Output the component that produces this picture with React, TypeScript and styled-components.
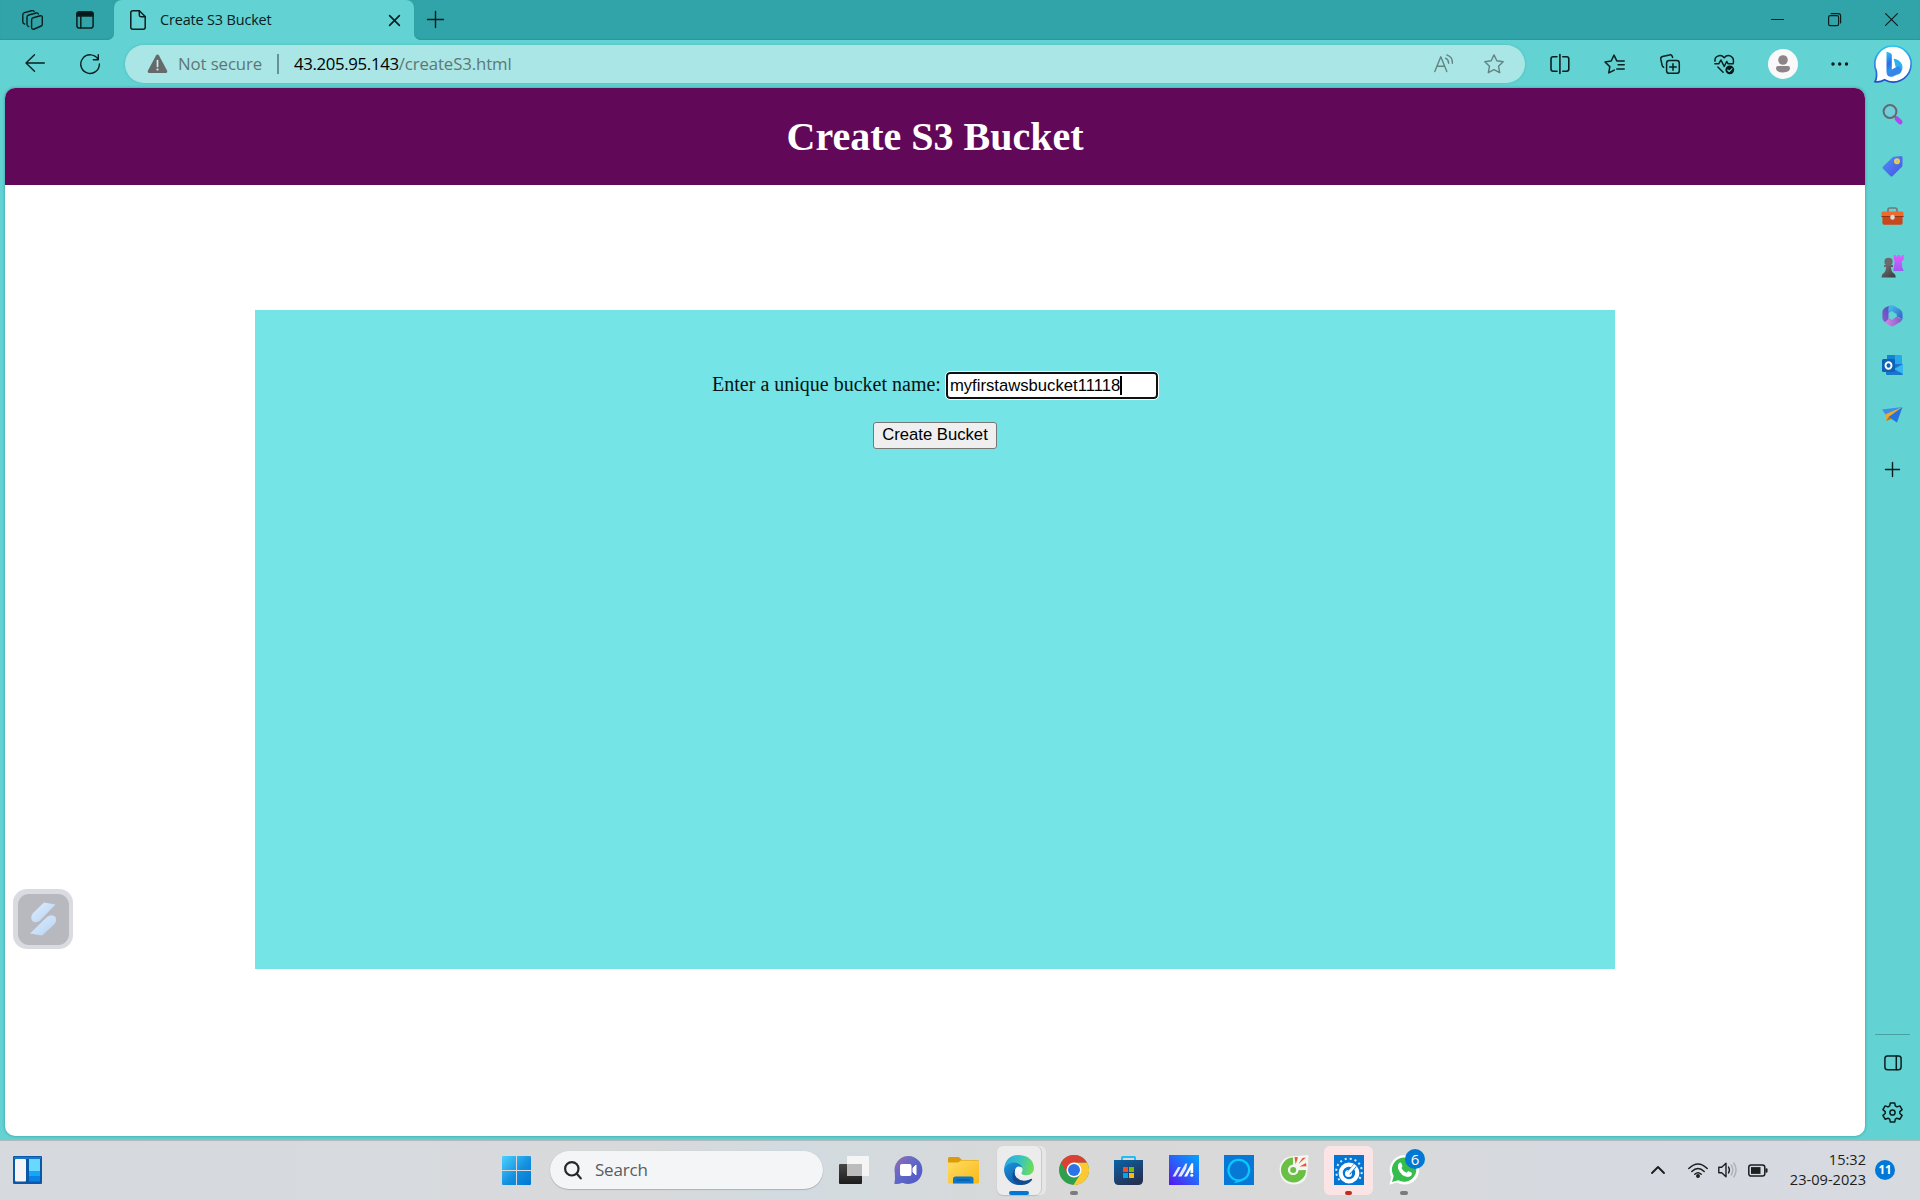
import React from "react";
import styled, { createGlobalStyle } from "styled-components";

const ui = `"Open Sans", "Noto Sans", sans-serif`;

const GlobalStyle = createGlobalStyle`
  * { box-sizing: border-box; }
  html, body { margin: 0; padding: 0; overflow: hidden; }
  svg { display: block; flex: none; overflow: visible; }
`;

const Desktop = styled.div`
  width: 1920px;
  height: 1200px;
  display: flex;
  flex-direction: column;
  background: #62d2d2;
  overflow: hidden;
`;

/* ---------- title bar ---------- */
const TitleBar = styled.header`
  height: 40px;
  flex: none;
  display: flex;
  background: #62d2d2;
`;
const StripLeft = styled.div`
  width: 114px;
  display: flex;
  align-items: center;
  padding-left: 22px;
  gap: 33px;
  background: #30a4a8;
  border-bottom-right-radius: 7px;
  box-shadow: inset 0 -1px 1px #2b989c;
`;
const TabBack = styled.div`
  width: 300px;
  background: linear-gradient(#30a4a8 0 50%, #62d2d2 50%);
`;
const Tab = styled.div`
  height: 40px;
  display: flex;
  align-items: center;
  padding: 0 14px 0 16px;
  background: #62d2d2;
  border-radius: 8px 8px 0 0;
`;
const TabTitle = styled.span`
  flex: 1;
  margin-left: 14px;
  padding-bottom: 1px;
  font: 400 14.4px/20px ${ui};
  letter-spacing: -0.13px;
  color: #06201f;
  white-space: nowrap;
`;
const StripRight = styled.div`
  flex: 1;
  display: flex;
  align-items: center;
  padding: 0 22px 1px 13px;
  background: #30a4a8;
  border-bottom-left-radius: 7px;
  box-shadow: inset 0 -1px 1px #2b989c;
`;
const WindowButtons = styled.div`
  display: flex;
  gap: 44px;
  margin-left: auto;
`;

/* ---------- toolbar ---------- */
const Toolbar = styled.nav`
  height: 48px;
  flex: none;
  display: flex;
  align-items: center;
  padding-left: 25px;
`;
const NavButtons = styled.div`
  width: 100px;
  flex: none;
  display: flex;
  gap: 35px;
`;
const AddressBar = styled.div`
  width: 1400px;
  height: 38px;
  flex: none;
  display: flex;
  align-items: center;
  padding: 0 21px 0 22px;
  border-radius: 19px;
  background: #a9e6e5;
  box-shadow: 0 0 3px rgba(30, 130, 130, 0.25);
`;
const AddressText = styled.span<{ $tone: string; $spacing: number }>`
  font: 400 16.8px/24px ${ui};
  letter-spacing: ${(p) => p.$spacing}px;
  color: ${(p) => p.$tone};
  white-space: nowrap;
`;
const NotSecure = styled.div`
  width: 99px;
  margin-left: 10px;
`;
const Divider = styled.span`
  width: 2px;
  height: 20px;
  margin-right: 15px;
  background: #69918f;
`;
const AddressActions = styled.div`
  display: flex;
  gap: 30px;
  margin-left: auto;
`;
const ToolSlot = styled.div<{ $w?: number }>`
  width: ${(p) => p.$w ?? 55}px;
  display: flex;
  justify-content: center;
`;
const ToolGroup = styled.div`
  display: flex;
  flex: none;
  align-items: center;
  margin-left: 7px;
`;

/* ---------- page + sidebar ---------- */
const Middle = styled.div`
  height: 1052px;
  flex: none;
  display: flex;
  padding: 0 0 4px 5px;
`;
const Page = styled.main`
  position: relative;
  width: 1860px;
  background: #fff;
  border-radius: 10px;
  overflow: hidden;
  box-shadow: 0 0 3px rgba(20, 90, 90, 0.5);
`;
const Banner = styled.div`
  height: 97px;
  display: flex;
  align-items: center;
  justify-content: center;
  background: #610858;
`;
const Heading = styled.h1`
  margin: 0;
  font: 700 40px/46px "Liberation Serif", "Times New Roman", serif;
  color: #fff;
`;
const FormPanel = styled.form`
  width: 1360px;
  height: 659px;
  margin: 125px auto 0;
  padding-top: 62px;
  display: flex;
  flex-direction: column;
  align-items: center;
  background: #74e4e7;
`;
const Field = styled.label`
  display: flex;
  align-items: flex-start;
  gap: 5px;
  font: 400 20px/26px "Liberation Serif", "Times New Roman", serif;
  color: #061413;
`;
const FieldName = styled.span`
  height: 26px;
  line-height: 25px;
`;
const BucketInput = styled.div`
  width: 212px;
  height: 27px;
  display: flex;
  align-items: center;
  padding: 0 0 1px 2px;
  border: 2px solid #101010;
  border-radius: 4px;
  outline: 1px solid #fff;
  background: #fff;
  font: 400 16.67px/19px "Liberation Sans", Arial, sans-serif;
  color: #000;
`;
const Caret = styled.span`
  width: 1.5px;
  height: 19px;
  background: #000;
`;
const Submit = styled.button`
  width: 124px;
  height: 27px;
  margin-top: 23px;
  padding: 0 0 2px;
  border: 1px solid #767676;
  border-radius: 3px;
  background: #efefef;
  font: 400 16.67px/20px "Liberation Sans", Arial, sans-serif;
  color: #000;
  white-space: nowrap;
`;
const FloatingWidget = styled.div`
  position: absolute;
  left: 8px;
  top: 801px;
  width: 60px;
  height: 60px;
  display: grid;
  place-items: center;
  border-radius: 14px;
  background: #dadbe0;
`;
const WidgetInner = styled.div`
  width: 51px;
  height: 51px;
  display: grid;
  place-items: center;
  border-radius: 11px;
  background: #b8b9bf;
`;

const Sidebar = styled.aside`
  width: 55px;
  display: flex;
  flex-direction: column;
  align-items: center;
`;
const SideSlot = styled.div<{ $h: number }>`
  height: ${(p) => p.$h}px;
  flex: none;
  display: flex;
  align-items: center;
`;
const SideBottom = styled.div`
  width: 35px;
  margin-top: auto;
  padding-top: 20px;
  padding-bottom: 13px;
  display: flex;
  flex-direction: column;
  align-items: center;
  gap: 31px;
  border-top: 1px solid #4a9f9f;
`;

/* ---------- taskbar ---------- */
const Taskbar = styled.footer`
  height: 60px;
  flex: none;
  display: flex;
  align-items: center;
  padding: 0 25px 1px 13px;
  border-top: 1px solid #b3b9bb;
  background: linear-gradient(90deg, #d6d9de 0, #d7dade 22%, #d8d9da 33%, #d2dbe0 41%, #d5dadc 48%, #d8d8d8 54%, #d9d9d9 70%, #d6d9df 80%, #d7dadf 100%);
`;
const StartSlot = styled.div`
  margin-left: 460px;
`;
const SearchBox = styled.div`
  width: 273px;
  height: 38px;
  margin-left: 19px;
  padding-left: 14px;
  display: flex;
  align-items: center;
  gap: 13px;
  border-radius: 19px;
  background: #f3f5f6;
  box-shadow: 0 1px 1px #aeb2b5, 0 0 1px #b9bdc0;
  font: 400 17px/24px ${ui};
  letter-spacing: -0.2px;
  color: #5a5c5e;
`;
const Apps = styled.div`
  display: flex;
  margin-left: 3px;
`;
const AppSlot = styled.div`
  position: relative;
  width: 55px;
  height: 50px;
  display: grid;
  place-items: center;
`;
const ActiveTile = styled.div<{ $tint: string; $w: number; $stack?: boolean }>`
  width: ${(p) => p.$w}px;
  height: 49px;
  display: grid;
  place-items: center;
  border-radius: 6px;
  background: ${(p) => p.$tint};
  box-shadow: ${(p) => (p.$stack ? "1px 0 0 #c9c9c9, 5px 0 0 #e6e6e6, 0 1px 1px #bbb" : "none")};
`;
const Pill = styled.span<{ $w: number; $tone: string }>`
  position: absolute;
  bottom: 0;
  left: calc(50% - ${(p) => p.$w / 2}px);
  width: ${(p) => p.$w}px;
  height: 4px;
  border-radius: 2px;
  background: ${(p) => p.$tone};
`;
const CountBadge = styled.span`
  position: absolute;
  right: 6px;
  top: 4px;
  width: 20px;
  height: 20px;
  border-radius: 50%;
  background: #0078d4;
  color: #fff;
  text-align: center;
  font: 400 15px/20px ${ui};
`;
const Tray = styled.div`
  margin-left: auto;
  display: flex;
  align-items: center;
`;
const TrayIcons = styled.div`
  display: flex;
  align-items: center;
  gap: 10px;
  margin-left: 23px;
`;
const Clock = styled.div`
  width: 98px;
  padding-bottom: 3px;
  text-align: right;
  font: 400 14.6px/20px ${ui};
  letter-spacing: 0;
  color: #1c1e20;
`;
const NoticeBadge = styled.div`
  width: 20px;
  height: 20px;
  margin-left: 9px;
  border-radius: 50%;
  background: #0078d7;
  color: #fff;
  text-align: center;
  font: 700 11.5px/20px ${ui};
`;

/* ---------- line icon base ---------- */
type LineProps = { w?: number; h?: number; color?: string; sw?: number; children: React.ReactNode };
const Line = ({ w = 20, h = 20, color = "#0b1f1f", sw = 1.5, children }: LineProps) => (
  <svg width={w} height={h} viewBox={`0 0 ${w} ${h}`} fill="none" stroke={color} strokeWidth={sw} strokeLinecap="round" strokeLinejoin="round">
    {children}
  </svg>
);

const WorkspacesIcon = () => (
  <Line w={21} h={20} sw={1.4}>
    <path d="M11.300 7.700 18.300 5.800Q20.300 5.500 20.300 7.500V14.200Q20.300 15.500 19.200 16L12.300 19Q9.600 19.800 9.600 17.300V10Q9.600 8.200 11.300 7.700Z" />
    <path d="M6.800 16.600Q5 16.200 5 14.200V7.200Q5 5.500 6.800 5L14 3Q15.900 2.600 16.400 4" />
    <path d="M2.600 14Q.8 13.600.8 12V5Q.8 3.200 2.500 2.700L9.500.8Q11.500.3 12.200 1.500" />
  </Line>
);
const TabActionsIcon = () => (
  <Line w={18} h={18}>
    <rect x=".9" y=".9" width="16.2" height="16.2" rx="2.6" />
    <path d="M.9 5V3Q.9.9 3 .9h12q2.1 0 2.1 2.1v2z" fill="#061818" />
    <path d="M4.8 5v12" />
  </Line>
);
const FileIcon = () => (
  <Line w={16} h={20}>
    <path d="M3 .8h6.3l5.9 5.7v10.7q0 2-2 2H2.8q-2 0-2-2V2.8q0-2 2.200-2z" />
    <path d="M9.300.8v4.200q0 1.700 1.700 1.700h4.200" />
  </Line>
);
const CrossIcon = ({ s = 11, sw = 1.6 }: { s?: number; sw?: number }) => (
  <Line w={s} h={s} sw={sw}><path d={`M.6.6 ${s - 0.6} ${s - 0.6}M${s - 0.6} .6.6 ${s - 0.6}`} /></Line>
);
const PlusIcon = ({ s = 17 }: { s?: number }) => (
  <Line w={s} h={s} sw={1.4}><path d={`M${s / 2} .5V${s - 0.5}M.5 ${s / 2}H${s - 0.5}`} /></Line>
);
const BackIcon = () => (
  <Line w={20} h={18} sw={1.4}><path d="M19.300 9H1M9.500.8 1 9l8.500 8.200" /></Line>
);
const ReloadIcon = () => (
  <Line w={20} h={20} sw={1.4}><path d="M18 5.200A9.300 9.300 0 1 0 19.400 10M18.300.8v4.900h-5" /></Line>
);
const WarningIcon = () => (
  <svg width="21" height="20" viewBox="0 0 21 20">
    <path d="M9 1.600q1.500-2 3 0l8 14.800q1 2.400-1.400 2.600H2.400Q0 18.800 1 16.400z" fill="#66696a" />
    <path d="M10.500 6.500v6" stroke="#cdeeee" strokeWidth="1.700" strokeLinecap="round" />
    <circle cx="10.500" cy="15.500" r="1.100" fill="#cdeeee" />
  </svg>
);
const ReadAloudIcon = () => (
  <Line w={20} h={20} color="#638483" sw={1.4}>
    <path d="M.8 17.500 6.800 2.800l6 14.700M2.900 12.300h7.700M11.600 4.200q3 1.400 3 5M12.800.9q6 2 5.600 8.300" />
  </Line>
);
const starPath = "M10 .9l2.800 5.900 6.400.9-4.700 4.500 1.200 6.500L10 15.600l-5.700 3.100 1.200-6.500L.8 7.700l6.400-.9z";
const StarIcon = () => <Line color="#638483" sw={1.4}><path d={starPath} /></Line>;
const SplitIcon = () => (
  <Line w={20} h={20} sw={1.6}>
    <path d="M9.900.5v19M7 2.800H3.200Q1 2.800 1 5v10q0 2.200 2.200 2.200H7M12.800 2.800h3.800q2.200 0 2.200 2.200v10q0 2.200-2.200 2.200h-3.800" />
  </Line>
);
const FavoritesIcon = () => (
  <Line w={21} h={20}>
    <path d="M10.300 16.100 4.800 18.900l1-6.300L1 8l6.200-1L10 1.100l2.800 5.800h7.400M14.100 10.800h6.100M12.800 15h7.400" />
  </Line>
);
const CollectionsIcon = () => (
  <Line w={20} h={20}>
    <rect x="6.600" y="6.600" width="12.700" height="12.700" rx="2.600" />
    <path d="M13 9.700v6.600M9.700 13h6.600M3.700 13.300Q2.500 12.600 2.100 11.200L.8 5.200Q.4 3.100 2.500 2.500L9.500.9q2.200-.4 2.800 1.500l.3 1" />
  </Line>
);
const HeartIcon = () => (
  <Line w={21} h={20}>
    <path d="M1 7.200Q.5 3.400 3.700 2.100 7.400.4 10.200 3.700 13 .4 16.700 2.100 20.100 3.900 19.400 8.600M.9 9.800h3.800l2.300-3.800 3.200 6.500 2.500-5 1.500 2.300h5M3.900 13l5.200 5.200" />
    <circle cx="15.800" cy="15.800" r="4.400" fill="#061818" stroke="none" />
    <path d="m13.700 16 1.500 1.500 2.800-2.900" stroke="#62d2d2" strokeWidth="1.100" />
  </Line>
);
const AvatarIcon = () => (
  <svg width="30" height="30" viewBox="0 0 30 30">
    <circle cx="15" cy="15" r="15" fill="#faf9fa" />
    <circle cx="15" cy="11" r="4.800" fill="#8b8587" />
    <path d="M10 17h10q2 0 2 2 0 4.400-7 4.400T8 19q0-2 2-2z" fill="#8b8587" />
  </svg>
);
const DotsIcon = () => (
  <svg width="18" height="4" viewBox="0 0 18 4" fill="#061818">
    <circle cx="2" cy="2" r="1.700" /><circle cx="8.700" cy="2" r="1.700" /><circle cx="15.500" cy="2" r="1.700" />
  </svg>
);
const BingIcon = () => (
  <svg width="38" height="38" viewBox="0 0 38 38">
    <defs>
      <linearGradient id="bingRing" x1="0" y1="0" x2="0" y2="1"><stop stopColor="#23c3f3" /><stop offset=".5" stopColor="#328be8" /><stop offset="1" stopColor="#1d4dcc" /></linearGradient>
      <linearGradient id="bingB" x1="0" y1="0" x2=".3" y2="1"><stop stopColor="#35c6f4" /><stop offset=".5" stopColor="#2a6ee6" /><stop offset="1" stopColor="#2bb0ee" /></linearGradient>
    </defs>
    <path d="M19 1a18 18 0 1 1-8.500 33.800Q6 37.500 1 36.700 3.300 33 2.300 26.200A18 18 0 0 1 19 1z" fill="#fff" stroke="url(#bingRing)" strokeWidth="1.700" />
    <path d="M12.500 7.300q0-.8.800-.5l3.300 1.500q1.200.6 1.200 2v14.500l4-2.300 1.500 5.300-5.600 3.200q-2.600 1-4.200-1-1-1.200-1-3z" fill="url(#bingB)" />
    <path d="M19.800 14.300q-.2-.7.600-.5 5.500 1 7.600 5.800 1.700 5-2 8.900l-3.600 2q3.600-3 2.400-6.200l-3-1.800z" fill="#29b2ec" />
    <path d="M17.800 24.800 24.500 21q3.500 2 2.500 6-.8 1.300-8 4.500-4.500 1-6-2z" fill="#3686e8" />
  </svg>
);

/* ---------- sidebar drawings ---------- */
const SideSearch = () => (
  <svg width="21" height="21" viewBox="0 0 21 21">
    <circle cx="8" cy="7.500" r="6.400" fill="#6fcfdc" stroke="#65696c" strokeWidth="2" />
    <path d="m13 12.500 2 2" stroke="#65696c" strokeWidth="2" />
    <path d="m15 14.800 3.200 3.200" stroke="#b444f2" strokeWidth="4.600" strokeLinecap="round" />
  </svg>
);
const SideTag = () => (
  <svg width="21" height="21" viewBox="0 0 21 21">
    <defs><linearGradient id="tag" x1="0" y1="0" x2="1" y2="1"><stop stopColor="#4b93ff" /><stop offset="1" stopColor="#4c50dd" /></linearGradient></defs>
    <path d="M12 .8 19 0q1.600 0 1.600 1.600l-.2 7.600q0 1-.7 1.700L10.700 20q-1.200 1-2.400 0L1 12.800q-1-1.300 0-2.400L10.500 1.500q.7-.6 1.500-.7z" fill="url(#tag)" />
    <circle cx="15" cy="5.200" r="2.100" fill="#8fd0c0" stroke="#ffc83d" strokeWidth="1.700" />
  </svg>
);
const SideToolbox = () => (
  <svg width="23" height="18" viewBox="0 0 23 18">
    <path d="M7 5V2.800Q7 1 8.800 1h5.400Q16 1 16 2.800V5" fill="none" stroke="#74777b" strokeWidth="1.700" />
    <path d="M2 4.500h19q1.500 0 1.500 1.600V10H.5V6.100Q.5 4.500 2 4.500z" fill="#f0692b" />
    <path d="M1.400 10h20.200v6q0 1.700-1.700 1.700H3.100q-1.700 0-1.700-1.700z" fill="#c9471c" />
    <path d="M.5 9.500h22" stroke="#8e3412" strokeWidth="1" />
    <rect x="9.300" y="7.800" width="4.400" height="5" rx="2" fill="#d7dbdd" />
  </svg>
);
const SideGames = () => (
  <svg width="23" height="23" viewBox="0 0 23 23">
    <defs>
      <linearGradient id="rook" x1="0" y1="0" x2="0" y2="1"><stop stopColor="#e45cff" /><stop offset="1" stopColor="#9a5cf4" /></linearGradient>
      <linearGradient id="pawn" x1="0" y1="0" x2="1" y2="1"><stop stopColor="#77777a" /><stop offset="1" stopColor="#39393c" /></linearGradient>
    </defs>
    <path d="M12.800 0h2v1.500h1.700V0H19v1.500h1.700V0h2v4.500l-2 2 .5 6q1.300 1 1.300 3.500H12.300l1.500-9.500-1-2z" fill="url(#rook)" />
    <circle cx="7.500" cy="6.800" r="4.100" fill="#6d6a6d" />
    <path d="M3 10h9v2H10q0 4.500 2.700 6.200 2 .8 2 4.300H.5q0-3.500 2-4.300Q5 16.500 5 12H3z" fill="url(#pawn)" />
  </svg>
);
const SideM365 = () => (
  <svg width="21" height="22" viewBox="0 0 21 22">
    <defs>
      <linearGradient id="m1" x1="0" y1="1" x2="1" y2="0"><stop stopColor="#8c5ad2" /><stop offset="1" stopColor="#4b4fb8" /></linearGradient>
      <linearGradient id="m2" x1="0" y1="0" x2="1" y2="1"><stop stopColor="#46c5ec" /><stop offset="1" stopColor="#315fc8" /></linearGradient>
      <linearGradient id="m3" x1="0" y1="0" x2="1" y2="0"><stop stopColor="#d58be0" /><stop offset="1" stopColor="#8155cc" /></linearGradient>
    </defs>
    <path d="M5.500 1.500 9.500.4v5.400l-3 2v7.700L3 17.200Q.4 15.700.4 13V7q0-3.500 5.100-5.500z" fill="url(#m1)" />
    <path d="M8 .6q2-.8 4 .2l6.200 3.600Q20.500 6 20.500 8.500V14l-5.700-2.500V9.200L9.700 6 6.500 7.800Q5.700 2 8 .6z" fill="url(#m2)" />
    <path d="m20.500 13-.3 1.500q-.5 1.500-2 2.400L12 20.700q-2 1.100-4 0L2.500 17.500 6.500 14v-1.500l3.400 2.400 4.900-3.300q3 2.900 5.700 1.400z" fill="url(#m3)" />
  </svg>
);
const SideOutlook = () => (
  <svg width="21" height="20" viewBox="0 0 21 20">
    <rect x="5" y="0" width="15" height="14" rx="1.200" fill="#28a8ea" />
    <path d="M5 0h8v7H5z" fill="#1384d4" />
    <path d="M4 9h17v9.500q0 1.500-1.500 1.500h-14Q4 20 4 18.500z" fill="#1a74c8" />
    <path d="M21 9v10L12 14z" fill="#38b6f1" />
    <rect x="0" y="4" width="13" height="13" rx="1.500" fill="#0c62b8" />
    <ellipse cx="6.500" cy="10.500" rx="3" ry="3.300" fill="none" stroke="#fff" strokeWidth="1.900" />
  </svg>
);
const SideDrop = () => (
  <svg width="21" height="16" viewBox="0 0 21 16">
    <path d="M0 2.500 20.500 0 4 8z" fill="#3a8ff0" />
    <path d="M4 7 20.500 0 6.500 10l-2.200 4z" fill="#f5a623" />
    <path d="M6.500 10 20.500 0 15 15.500z" fill="#2273dd" />
    <path d="M4.300 14 6.500 10l3.500 1.500z" fill="#b8751a" />
  </svg>
);
const PanelIcon = () => (
  <Line w={18} h={16}><rect x=".9" y=".9" width="16.200" height="13.800" rx="2.600" /><path d="M12.300.9v13.800" /></Line>
);
const GearIcon = () => (
  <Line w={21} h={21}>
    <path d="M8.300 1h4.400l.6 2.900 1.700 1 2.900-1 2.200 3.800-2.300 1.900v1.900l2.300 1.900-2.200 3.800-2.900-1-1.700 1-.6 2.900H8.300l-.6-2.900-1.700-1-2.900 1L.9 13.400l2.300-1.900V9.600L.9 7.700l2.200-3.800 2.900 1 1.700-1z" />
    <circle cx="10.500" cy="10.500" r="2.600" />
  </Line>
);

/* ---------- taskbar drawings ---------- */
const WidgetsIcon = () => (
  <svg width="29" height="28" viewBox="0 0 29 28">
    <rect width="29" height="28" rx="1" fill="#0c57a6" />
    <rect x="1" y="1" width="27" height="2" fill="#1976cf" />
    <rect x="2" y="3" width="11" height="22.500" rx="1" fill="#f5f5f7" />
    <rect x="16" y="3" width="11" height="12" fill="#68d8ff" />
    <rect x="16" y="15" width="11" height="5" fill="#18a5f5" />
    <rect x="16" y="20" width="11" height="5.500" fill="#0782e6" />
  </svg>
);
const StartIcon = () => (
  <svg width="29" height="29" viewBox="0 0 29 29">
    <defs><linearGradient id="win" x1="0" y1="0" x2="1" y2="1"><stop stopColor="#4cd0ff" /><stop offset=".55" stopColor="#1490df" /><stop offset="1" stopColor="#0078d4" /></linearGradient></defs>
    <path d="M1 0h13v14H0V1Q0 0 1 0zM15 0h13q1 0 1 1v13H15zM0 15h14v14H1q-1 0-1-1zM15 15h14v13q0 1-1 1H15z" fill="url(#win)" />
  </svg>
);
const SearchIcon = () => (
  <Line w={18} h={19} color="#25272a" sw={2.2}><circle cx="7.800" cy="7.800" r="6.700" /><path d="m12.800 12.800 4 4.600" /></Line>
);
const TaskViewIcon = () => (
  <svg width="30" height="28" viewBox="0 0 30 28">
    <defs><linearGradient id="tv" x1="0" y1="0" x2="0" y2="1"><stop stopColor="#474745" /><stop offset="1" stopColor="#1c1c1b" /></linearGradient></defs>
    <rect y="8" width="23" height="20" rx="1" fill="url(#tv)" />
    <rect x="8" y="0" width="22" height="20" rx="1" fill="#f5f5f5" />
    <path d="M8 8h15v12H8z" fill="#bcbcbc" />
  </svg>
);
const ChatIcon = () => (
  <svg width="29" height="28" viewBox="0 0 29 28">
    <defs><linearGradient id="chat" x1="0" y1="0" x2="1" y2="1"><stop stopColor="#9a6bb5" /><stop offset=".45" stopColor="#6168c6" /><stop offset="1" stopColor="#4f55c9" /></linearGradient></defs>
    <path d="M14.500 0a14 14 0 1 1-6 26.700Q4 28.500.3 27.800 1.500 23.500.8 17A14 14 0 0 1 14.500 0z" fill="url(#chat)" />
    <rect x="6" y="8" width="11.500" height="12" rx="2" fill="#fff" />
    <path d="m19 12 3-3v10l-3-3z" fill="#fff" stroke="#fff" strokeLinejoin="round" />
  </svg>
);
const FolderIcon = () => (
  <svg width="31" height="27" viewBox="0 0 31 27">
    <defs><linearGradient id="fold" x1="0" y1="0" x2="1" y2="1"><stop stopColor="#ffdc66" /><stop offset="1" stopColor="#f9b915" /></linearGradient></defs>
    <path d="M0 1.500Q0 0 1.500 0H10q1 0 2 1l2 2h15q2 0 2 2v3H0z" fill="#dc9b07" />
    <path d="M0 5.500h10L13 3.500h16.500q1.500 0 1.500 1.500v20q0 1.500-1.500 1.500h-28Q0 26.500 0 25z" fill="url(#fold)" />
    <path d="M5 26.500V22q0-2.500 2.500-2.500h15.500q2.500 0 2.500 2.500v4.500z" fill="#0a77cc" />
    <path d="M8.500 23h13" stroke="#075596" strokeWidth="1.200" />
  </svg>
);
const EdgeIcon = () => (
  <svg width="30" height="30" viewBox="0 0 30 30">
    <defs>
      <linearGradient id="eg" x1="0" y1=".3" x2="1" y2=".5"><stop stopColor="#2aa8e0" /><stop offset=".5" stopColor="#36c4c4" /><stop offset="1" stopColor="#70dd55" /></linearGradient>
      <linearGradient id="eb" x1="0" y1="0" x2=".5" y2="1"><stop stopColor="#1d96dc" /><stop offset="1" stopColor="#0f5cae" /></linearGradient>
    </defs>
    <path d="M0 14Q1.500 0 15 0 29.500 1 30 13.500q-.5 6.500-7.500 6.800-6 0-5-2.800 2-2.500.3-5.200Q15 9 10 9.300 4 9.500 0 14z" fill="url(#eg)" />
    <path d="M0 14q3-6.500 10-6.500 6 .3 8.300 5Q13 9.500 11 14.500q-1.800 6 3 10.500 3 2.500 5 4.500-9 2-15-4.800Q0 20 0 14z" fill="url(#eb)" />
    <path d="M11.300 13.800q-2 5 1.200 8.700 5 5 12.500 2.200 4-2 3 .3-3.500 5-11 5-8.500-1.500-8.500-9 .3-5 2.800-7.200z" fill="#124c8e" />
    <path d="M11.500 14.500q1-2.500 4-2.200 3.500 1 2.300 4.700-1.800 2 1.200 3 2.500.8 4 .5Q19 22.300 15.500 20.200 11.500 18.500 11.500 14.500z" fill="#f2f4f5" />
  </svg>
);
const ChromeIcon = () => (
  <svg width="30" height="30" viewBox="0 0 30 30">
    <circle cx="15" cy="15" r="15" fill="#2f9e4d" />
    <path d="M15 7.500h13A15 15 0 0 1 14.500 30l7-11.300z" fill="#fcc934" />
    <path d="M2 7.500A15 15 0 0 1 28 7.500H15L8.500 18.700z" fill="#dc3f34" />
    <circle cx="15" cy="15" r="7.500" fill="#fff" />
    <circle cx="15" cy="15" r="6" fill="#2b74e8" />
  </svg>
);
const StoreIcon = () => (
  <svg width="29" height="30" viewBox="0 0 29 30">
    <defs><linearGradient id="st" x1="0" y1="0" x2=".6" y2="1"><stop stopColor="#0b62a8" /><stop offset="1" stopColor="#243153" /></linearGradient></defs>
    <path d="M8 6V2.500Q8 2 8.500 2h12q.5 0 .5.500V6" fill="none" stroke="#22bdf5" strokeWidth="2" />
    <path d="M0 5h29v20q0 5-5 5H5q-5 0-5-5z" fill="url(#st)" />
    <path d="M9 12h5v5H9z" fill="#f25022" /><path d="M15 12h5v5h-5z" fill="#7fba00" />
    <path d="M9 18h5v5H9z" fill="#00a4ef" /><path d="M15 18h5v5h-5z" fill="#ffb900" />
  </svg>
);
const MyAsusIcon = () => (
  <svg width="30" height="30" viewBox="0 0 30 30">
    <defs><linearGradient id="ma" x1="0" y1="1" x2="1" y2="0"><stop stopColor="#5a14f0" /><stop offset=".5" stopColor="#2a62fa" /><stop offset="1" stopColor="#00a5ff" /></linearGradient></defs>
    <path d="M0 0h30v30H0z" fill="url(#ma)" />
    <path d="M3.500 21.500 9 12h3L6.500 21.500zM9 21.500l7.500-13h1.800L17 14l-4.500 7.500z" fill="#e3e6ff" />
    <path d="M15 21.500 22.500 8.300h1.700V18h-2.700v-3.500L18 21.500z" fill="#fff" />
    <circle cx="22.800" cy="20.300" r="1.500" fill="#fff" />
  </svg>
);
const AlexaIcon = () => (
  <svg width="30" height="30" viewBox="0 0 30 30">
    <path d="M0 0h30v30H0z" fill="#0778d6" />
    <path d="M14.500 25.400A10.300 10.300 0 1 1 18 24.900Q16 25.800 13.500 26.300z" fill="none" stroke="#09c8fb" strokeWidth="2.300" />
  </svg>
);
const CocCocIcon = () => (
  <svg width="30" height="30" viewBox="0 0 30 30">
    <path d="M18 1Q1 0 .5 15 1.500 29 15 29.500 28 29 28.500 16L29.500 0z" fill="#f4f6f1" />
    <path d="M14 2.500A12.500 12.500 0 1 0 27 15l-7.500.2A5.300 5.300 0 1 1 14 9.500z" fill="#6abf45" />
    <circle cx="14.200" cy="15" r="4" fill="#6abf45" stroke="#f4f6f1" strokeWidth="2" />
    <path d="m15.500 2 3.500.2-2.300 7zM19.500 9 23.500 3l3.500-.5zM20.500 11.500l6.500-3.500.5 3.200z" fill="#e8553a" />
  </svg>
);
const OptimizerIcon = () => (
  <svg width="30" height="30" viewBox="0 0 30 30">
    <path d="M0 0h30v30H0z" fill="#0575d3" />
    <path d="M5.500 25A12.800 12.800 0 1 1 24.500 25" fill="none" stroke="#d9ecfb" strokeWidth="2" strokeDasharray="2 3" />
    <circle cx="15" cy="18" r="8.300" fill="none" stroke="#fff" strokeWidth="4.200" />
    <circle cx="14.500" cy="18.500" r="3.500" fill="#fff" />
    <path d="m14.500 18.500 6.500-8" stroke="#0575d3" strokeWidth="4" />
    <path d="m14 18.500 6.500-7.500" stroke="#fff" strokeWidth="2.800" strokeLinecap="round" />
  </svg>
);
const WhatsAppIcon = () => (
  <svg width="30" height="30" viewBox="0 0 30 30">
    <path d="M.3 29.700 2.500 22A14.700 14.700 0 1 1 8 27.600z" fill="#fff" />
    <path d="M3 27 4.700 21A12.200 12.200 0 1 1 9.200 25.300z" fill="#36bd4c" />
    <path d="M10 8q1.500-1.300 2.400.3l1 2.400q.2.800-1 2.300 1.800 3.600 5.100 4.800l1.700-1.700 3.600 1.700q.5 3.800-3.800 4.200-7-.6-10-8.500Q8.500 9.800 10 8z" fill="#fff" />
  </svg>
);
const ChevronIcon = () => <Line w={14} h={8} color="#1c1e20" sw={1.9}><path d="m1 7 6-6 6 6" /></Line>;
const WifiIcon = () => (
  <Line w={20} h={15} color="#1c1e20">
    <path d="M.8 5.500q9.200-9 18.400 0M3.800 8.500q6.200-6 12.400 0M6.800 11.200q3.200-3 6.400 0" /><circle cx="10" cy="13" r="1.200" fill="#1c1e20" />
  </Line>
);
const SpeakerIcon = () => (
  <Line w={20} h={16} color="#1c1e20" sw={1.4}>
    <path d="M.8 5.300H3.700L8 1.300v13.400l-4.300-4H.8zM10.500 5q1.900 3 0 6" />
    <path d="M13.200 3q3.200 5 0 10M15.800 1q4.500 7 0 14" stroke="#aeb1b5" />
  </Line>
);
const BatteryIcon = () => (
  <Line w={20} h={13} color="#1c1e20">
    <rect x=".8" y=".9" width="16" height="11.200" rx="2.300" /><rect x="3" y="3.100" width="9.500" height="6.800" fill="#1c1e20" stroke="none" />
    <path d="M18.500 5.300v2.400" strokeWidth="2" />
  </Line>
);
const RibbonIcon = () => (
  <svg width="27" height="34" viewBox="0 0 27 34">
    <defs><linearGradient id="rib" x1="0" y1="0" x2="1" y2="1"><stop stopColor="#e1edfb" /><stop offset="1" stopColor="#b3d4f6" /></linearGradient></defs>
    <path d="M14 .5 25.500 2.500 9.500 19Q4.500 21.500 2 18.500 0 15 3 11z" fill="url(#rib)" />
    <path d="M12 33.500 0 31.500 17 15Q22 11.500 25.500 15 27.500 19 24 22.500z" fill="url(#rib)" />
  </svg>
);

type DockApp = { icon: React.ReactNode; tile?: string; pill?: [number, string]; count?: number };
const dock: DockApp[] = [
  { icon: <TaskViewIcon /> },
  { icon: <ChatIcon /> },
  { icon: <FolderIcon /> },
  { icon: <EdgeIcon />, tile: "#ececec", pill: [20, "#0078d4"] },
  { icon: <ChromeIcon />, pill: [8, "#7b7b7b"] },
  { icon: <StoreIcon /> },
  { icon: <MyAsusIcon /> },
  { icon: <AlexaIcon /> },
  { icon: <CocCocIcon /> },
  { icon: <OptimizerIcon />, tile: "#fbe4e6", pill: [7, "#c42b1c"] },
  { icon: <WhatsAppIcon />, pill: [8, "#7b7b7b"], count: 6 },
];
const sideTools: [React.ReactNode, number][] = [
  [<SideSearch />, 53], [<SideTag />, 50], [<SideToolbox />, 50], [<SideGames />, 50],
  [<SideM365 />, 49], [<SideOutlook />, 50], [<SideDrop />, 50], [<PlusIcon s={15} />, 58],
];

export default function App() {
  return (
    <Desktop>
      <GlobalStyle />
      <TitleBar>
        <StripLeft><WorkspacesIcon /><TabActionsIcon /></StripLeft>
        <TabBack>
          <Tab><FileIcon /><TabTitle>Create S3 Bucket</TabTitle><CrossIcon /></Tab>
        </TabBack>
        <StripRight>
          <PlusIcon />
          <WindowButtons>
            <Line w={13} h={13} sw={1.2}><path d="M.5 6.500h12" /></Line>
            <Line w={13} h={13} sw={1.2}>
              <rect x=".6" y="2.600" width="10" height="10" rx="1.600" /><path d="M3.200.6h7.200q2.200 0 2.200 2.200v7.200" />
            </Line>
            <CrossIcon s={13} sw={1.2} />
          </WindowButtons>
        </StripRight>
      </TitleBar>
      <Toolbar>
        <NavButtons><BackIcon /><ReloadIcon /></NavButtons>
        <AddressBar>
          <WarningIcon />
          <NotSecure><AddressText $tone="#5f7675" $spacing={-0.1}>Not secure</AddressText></NotSecure>
          <Divider />
          <AddressText $tone="#000" $spacing={-0.35}>43.205.95.143</AddressText>
          <AddressText $tone="#5f7675" $spacing={-0.1}>/createS3.html</AddressText>
          <AddressActions><ReadAloudIcon /><StarIcon /></AddressActions>
        </AddressBar>
        <ToolGroup>
          <ToolSlot><SplitIcon /></ToolSlot>
          <ToolSlot><FavoritesIcon /></ToolSlot>
          <ToolSlot><CollectionsIcon /></ToolSlot>
          <ToolSlot><HeartIcon /></ToolSlot>
          <ToolSlot $w={61}><AvatarIcon /></ToolSlot>
          <ToolSlot $w={54}><DotsIcon /></ToolSlot>
          <ToolSlot $w={52}><BingIcon /></ToolSlot>
        </ToolGroup>
      </Toolbar>
      <Middle>
        <Page>
          <Banner><Heading>Create S3 Bucket</Heading></Banner>
          <FormPanel>
            <Field>
              <FieldName>Enter a unique bucket name:</FieldName>
              <BucketInput>myfirstawsbucket11118<Caret /></BucketInput>
            </Field>
            <Submit type="button">Create Bucket</Submit>
          </FormPanel>
          <FloatingWidget><WidgetInner><RibbonIcon /></WidgetInner></FloatingWidget>
        </Page>
        <Sidebar>
          {sideTools.map(([icon, h], i) => <SideSlot key={i} $h={h}>{icon}</SideSlot>)}
          <SideBottom><PanelIcon /><GearIcon /></SideBottom>
        </Sidebar>
      </Middle>
      <Taskbar>
        <WidgetsIcon />
        <StartSlot><StartIcon /></StartSlot>
        <SearchBox><SearchIcon />Search</SearchBox>
        <Apps>
          {dock.map((app, i) => (
            <AppSlot key={i}>
              {app.tile ? <ActiveTile $tint={app.tile} $w={i === 3 ? 44 : 49} $stack={i === 3}>{app.icon}</ActiveTile> : app.icon}
              {app.pill && <Pill $w={app.pill[0]} $tone={app.pill[1]} />}
              {app.count && <CountBadge>{app.count}</CountBadge>}
            </AppSlot>
          ))}
        </Apps>
        <Tray>
          <ChevronIcon />
          <TrayIcons><WifiIcon /><SpeakerIcon /><BatteryIcon /></TrayIcons>
          <Clock><div>15:32</div><div>23-09-2023</div></Clock>
          <NoticeBadge>11</NoticeBadge>
        </Tray>
      </Taskbar>
    </Desktop>
  );
}
